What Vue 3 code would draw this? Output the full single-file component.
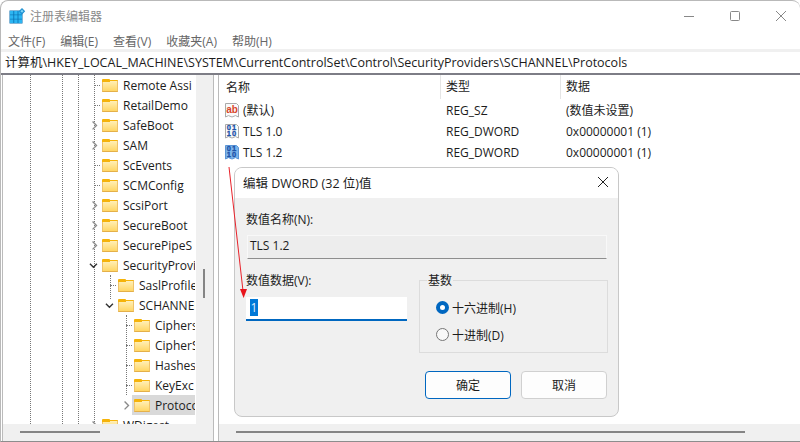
<script setup>
const menus = ['文件(F)', '编辑(E)', '查看(V)', '收藏夹(A)', '帮助(H)']
const tree = [
  { name: 'Remote Assi', level: 0, mark: 'dots' },
  { name: 'RetailDemo', level: 0, mark: 'dots' },
  { name: 'SafeBoot', level: 0, mark: 'closed' },
  { name: 'SAM', level: 0, mark: 'closed' },
  { name: 'ScEvents', level: 0, mark: 'dots' },
  { name: 'SCMConfig', level: 0, mark: 'dots' },
  { name: 'ScsiPort', level: 0, mark: 'closed' },
  { name: 'SecureBoot', level: 0, mark: 'closed' },
  { name: 'SecurePipeS', level: 0, mark: 'closed' },
  { name: 'SecurityProvi', level: 0, mark: 'open' },
  { name: 'SaslProfile', level: 1, mark: 'dots' },
  { name: 'SCHANNEL', level: 1, mark: 'open' },
  { name: 'Ciphers', level: 2, mark: 'dots' },
  { name: 'CipherS', level: 2, mark: 'dots' },
  { name: 'Hashes', level: 2, mark: 'dots' },
  { name: 'KeyExc', level: 2, mark: 'dots' },
  { name: 'Protocols', level: 2, mark: 'closed', selected: true },
  { name: 'WDigest', level: 0, mark: 'closed' },
]
const guides = [
  { x: 27, top: 0, height: 349 },
  { x: 59, top: 0, height: 349 },
  { x: 75, top: 0, height: 349 },
  { x: 91, top: 0, height: 349 },
  { x: 107, top: 200, height: 24 },
  { x: 123, top: 240, height: 80 },
]
const values = [
  { name: '(默认)', type: 'REG_SZ', data: '(数值未设置)', icon: 'sz' },
  { name: 'TLS 1.0', type: 'REG_DWORD', data: '0x00000001 (1)', icon: 'bin' },
  { name: 'TLS 1.2', type: 'REG_DWORD', data: '0x00000001 (1)', icon: 'sel' },
]
</script>

<template>
  <div class="window">
    <header class="titlebar">
      <svg class="app-icon" width="18" height="18" viewBox="0 0 18 18">
        <rect x="0.5" y="2.5" width="13" height="13" fill="#0a6fb0" />
        <g fill="#2cb5f2">
          <rect x="1" y="3" width="3.4" height="3.6" /><rect x="5.2" y="3" width="3.4" height="3.6" /><rect x="9.4" y="3" width="3.6" height="3.6" />
          <rect x="1" y="7.2" width="3.4" height="3.6" /><rect x="5.2" y="7.2" width="3.4" height="3.6" /><rect x="9.4" y="7.2" width="3.6" height="3.6" />
          <rect x="1" y="11.4" width="3.4" height="3.6" /><rect x="5.2" y="11.4" width="3.4" height="3.6" /><rect x="9.4" y="11.4" width="3.6" height="3.6" />
        </g>
        <path d="M13 0l3.2 3.2L13 6.4 9.8 3.2z" fill="#1f8fd0" />
        <path d="M13 1.6l1.6 1.6L13 4.8l-1.6-1.6z" fill="#7fd4f7" />
      </svg>
      <span class="title">注册表编辑器</span>
      <div class="controls">
        <svg width="12" height="12" viewBox="0 0 12 12"><path d="M1 6.5h10" stroke="#888" fill="none" /></svg>
        <svg width="12" height="12" viewBox="0 0 12 12"><rect x="1.5" y="1.5" width="9" height="9" rx="1" stroke="#888" fill="none" /></svg>
        <svg width="12" height="12" viewBox="0 0 12 12"><path d="M1 1l10 10M11 1L1 11" stroke="#888" fill="none" /></svg>
      </div>
    </header>

    <nav class="menubar">
      <span v-for="m in menus" :key="m">{{ m }}</span>
    </nav>

    <div class="address">计算机\HKEY_LOCAL_MACHINE\SYSTEM\CurrentControlSet\Control\SecurityProviders\SCHANNEL\Protocols</div>

    <main class="panes">
      <section class="tree-pane">
        <div class="tree-top">
          <div class="tree">
            <i v-for="g in guides" :key="g.x + '-' + g.top" class="guide" :style="{ left: g.x + 'px', top: g.top + 'px', height: g.height + 'px' }"></i>
            <div v-for="row in tree" :key="row.name" class="tree-row" :style="{ paddingLeft: 83 + row.level * 16 + 'px' }">
              <span class="slot">
                <i v-if="row.mark === 'dots'" class="hdots"></i>
                <svg v-else-if="row.mark === 'closed'" width="16" height="16" viewBox="0 0 16 16"><path d="M7.5 4l4.5 4.5L7.5 13" fill="none" stroke="#8a8a8a" stroke-width="1.6" /></svg>
                <svg v-else width="16" height="16" viewBox="0 0 16 16"><path d="M4.5 6.5l4 4 4-4" fill="none" stroke="#333" stroke-width="1.6" /></svg>
              </span>
              <span class="row-main" :class="{ selected: row.selected }">
                <i class="folder"></i>
                <span class="row-name">{{ row.name }}</span>
              </span>
            </div>
          </div>
          <div class="vscroll"><i class="vthumb"></i></div>
        </div>
        <div class="hscroll"><i class="hthumb left-thumb"></i></div>
      </section>

      <section class="list-pane">
        <div class="list-body">
          <div class="list-head">
            <span class="col-name">名称</span>
            <span class="col-type">类型</span>
            <span class="col-data">数据</span>
          </div>
          <div v-for="v in values" :key="v.name" class="list-row">
            <span class="col-name value-name">
              <svg v-if="v.icon === 'sz'" class="val-icon" width="16" height="16" viewBox="0 0 16 16">
                <path d="M1.5 1.5h11l2 2v11.5l-3-1.4-3.5 1.4-3.5-1.4-3 1.4z" fill="#fafafa" stroke="#aaa" />
                <text x="8" y="10.5" text-anchor="middle" class="ab">ab</text>
              </svg>
              <svg v-else class="val-icon" width="16" height="16" viewBox="0 0 16 16">
                <path d="M1.5 1.5h11l2 2v11.5l-3-1.4-3.5 1.4-3.5-1.4-3 1.4z" :fill="v.icon === 'sel' ? '#7db4ea' : '#fafafa'" :stroke="v.icon === 'sel' ? '#5b95d6' : '#aaa'" />
                <text text-anchor="middle" class="bin"><tspan x="8" y="7.4">01</tspan><tspan x="8" y="13.4">10</tspan></text>
              </svg>
              <span>{{ v.name }}</span>
            </span>
            <span class="col-type">{{ v.type }}</span>
            <span class="col-data">{{ v.data }}</span>
          </div>
        </div>
        <div class="hscroll"><i class="hthumb right-thumb"></i></div>
      </section>
    </main>

    <div class="dialog">
      <div class="dlg-title">
        <span>编辑 DWORD (32 位)值</span>
        <svg width="12" height="12" viewBox="0 0 12 12"><path d="M1 1l10 10M11 1L1 11" stroke="#222" fill="none" /></svg>
      </div>
      <div class="dlg-body">
        <div class="dlg-label">数值名称(N):</div>
        <div class="name-field">TLS 1.2</div>
        <div class="dlg-grid">
          <div class="value-col">
            <div class="dlg-label">数值数据(V):</div>
            <div class="value-input"><span class="sel-text">1</span></div>
          </div>
          <div class="base-box">
            <span class="legend">基数</span>
            <div class="radio-row"><i class="radio checked"></i>十六进制(H)</div>
            <div class="radio-row"><i class="radio"></i>十进制(D)</div>
          </div>
        </div>
        <div class="dlg-actions">
          <button class="btn primary">确定</button>
          <button class="btn">取消</button>
        </div>
      </div>
    </div>

    <svg class="arrow" width="30" height="140" viewBox="0 0 30 140">
      <path d="M4 0L18 124" stroke="#e8222a" stroke-width="1" fill="none" />
      <path d="M15 122h7l-3.4 9z" fill="#e8141c" />
    </svg>
  </div>
</template>

<style scoped>
.window {
  position: relative;
  box-sizing: border-box;
  width: 800px;
  height: 442px;
  overflow: hidden;
  display: flex;
  flex-direction: column;
  background: #fff;
  border: 1px solid #b9b9b9;
  border-bottom-color: #8d8d8d;
  border-right: 0;
  border-radius: 8px 8px 0 0;
  font-family: "Open Sans", "Noto Sans CJK SC", sans-serif;
  font-size: 12px;
  color: #1c1c1c;
}
.titlebar {
  height: 29px;
  display: flex;
  align-items: center;
  flex: none;
}
.app-icon { margin: 2px 0 0 8px; }
.title {
  margin-left: 3px;
  color: #8a8a8a;
  font-size: 12px;
}
.controls {
  margin-left: auto;
  display: flex;
  gap: 34px;
  padding-right: 13px;
  padding-top: 1px;
}
.controls svg { display: block; }
.menubar {
  height: 19px;
  flex: none;
  display: flex;
  align-items: center;
  gap: 15px;
  padding-left: 7px;
  color: #666;
  box-sizing: border-box;
  padding-top: 3px;
}
.address {
  flex: none;
  box-sizing: border-box;
  height: 26px;
  line-height: 21px;
  padding-left: 4px;
  font-size: 12.5px;
  border-top: 3px solid #f0f0f0;
  border-bottom: 2px solid #7d7d86;
  white-space: nowrap;
  overflow: hidden;
}
.panes {
  flex: 1;
  min-height: 0;
  display: flex;
}
.tree-pane {
  width: 212px;
  margin-left: 1px;
  flex: none;
  display: flex;
  flex-direction: column;
  border-left: 1px solid #bbb;
  border-right: 1px solid #bbb;
  box-sizing: border-box;
}
.tree-top {
  flex: 1;
  min-height: 0;
  display: flex;
}
.tree {
  position: relative;
  width: 193px;
  overflow: hidden;
  flex: none;
}
.guide {
  position: absolute;
  border-left: 1px dotted #777;
}
.tree-row {
  position: relative;
  height: 20px;
  display: flex;
  align-items: stretch;
  box-sizing: border-box;
  padding-right: 1px;
}
.slot {
  width: 14px;
  flex: none;
  display: flex;
  align-items: center;
  justify-content: center;
  position: relative;
}
.hdots {
  position: absolute;
  left: 8px;
  width: 6px;
  top: 50%;
  border-top: 1px dotted #777;
}
.row-main {
  flex: 1;
  min-width: 0;
  display: flex;
  align-items: center;
  gap: 5px;
  padding-left: 2px;
  overflow: hidden;
}
.row-main.selected { background: #d9d9d9; }
.row-name { white-space: nowrap; }
.folder {
  position: relative;
  width: 16px;
  height: 12px;
  flex: none;
  margin-top: 2px;
  box-sizing: border-box;
  background: linear-gradient(#ffefb8, #ffd665);
  border-top: 1px solid #f5b30a;
  border-bottom: 1px solid #e4b04a;
  border-left: 1px solid #eec26a;
  border-right: 1px solid #eec26a;
}
.folder::before {
  content: "";
  position: absolute;
  left: -1px;
  top: -2px;
  width: 8px;
  height: 3px;
  background: #f5b30a;
  border-radius: 1px 1px 0 0;
}
.vscroll {
  flex: 1;
  background: #f0f0f0;
  position: relative;
}
.vthumb {
  position: absolute;
  left: 7px;
  top: 194px;
  width: 2px;
  height: 29px;
  background: #858585;
}
.hscroll {
  height: 17px;
  flex: none;
  background: #f0f0f0;
  position: relative;
}
.hthumb {
  position: absolute;
  top: 7px;
  height: 2px;
  background: #858585;
}
.left-thumb { left: 17px; width: 80px; }
.right-thumb { left: 17px; width: 509px; }
.list-pane {
  flex: 1;
  min-width: 0;
  margin-left: 4px;
  display: flex;
  flex-direction: column;
  border-left: 1px solid #bbb;
}
.list-body { flex: 1; min-height: 0; }
.list-head {
  height: 25px;
  padding-bottom: 1px;
  display: flex;
  align-items: center;
  box-sizing: border-box;
}
.list-row {
  height: 21px;
  padding-bottom: 1px;
  box-sizing: border-box;
  display: flex;
  align-items: center;
}
.col-name { width: 221px; padding-left: 7px; box-sizing: border-box; flex: none; }
.col-type { width: 120px; padding-left: 6px; box-sizing: border-box; flex: none; }
.col-data { padding-left: 6px; }
.list-head .col-type, .list-head .col-data {
  border-left: 1px solid #e5e5e5;
  height: 24px;
  line-height: 24px;
}
.list-head .col-type { padding-left: 5px; }
.list-head .col-data { padding-left: 5px; }
.list-row .col-type { padding-left: 6px; }
.list-row .col-data { padding-left: 6px; }
.value-name {
  display: flex;
  align-items: center;
  gap: 3px;
  padding-left: 5px;
}
.val-icon { flex: none; }
.ab {
  font: bold 10px "Liberation Sans", sans-serif;
  fill: #d8452a;
}
.bin {
  font: bold 7.5px "Liberation Sans", sans-serif;
  fill: #1c52a8;
  stroke: #1c52a8;
  stroke-width: 0.3px;
  letter-spacing: 1px;
}
.dialog {
  position: absolute;
  left: 233px;
  top: 166px;
  width: 385px;
  height: 250px;
  box-sizing: border-box;
  background: #f0f0f0;
  border: 1px solid #c8c8c8;
  border-radius: 8px;
  overflow: hidden;
  display: flex;
  flex-direction: column;
}
.dlg-title {
  height: 30px;
  flex: none;
  box-sizing: border-box;
  background: #fff;
  display: flex;
  align-items: center;
  justify-content: space-between;
  padding: 0 9px 2px 8px;
  font-size: 12.5px;
}
.dlg-body {
  flex: 1;
  padding: 12px 11px 0 11px;
  display: flex;
  flex-direction: column;
}
.dlg-label { height: 20px; line-height: 20px; }
.name-field {
  margin: 5px 0 0 1px;
  height: 24px;
  box-sizing: border-box;
  background: #ededed;
  border: 1px solid #f8f8f8;
  border-bottom: 1px solid #8e8e8e;
  line-height: 20px;
  padding-left: 2px;
}
.dlg-grid {
  display: grid;
  grid-template-columns: 161px 189px;
  column-gap: 12px;
  margin-top: 12px;
}
.value-input {
  margin-top: 6px;
  height: 24px;
  box-sizing: border-box;
  background: #fff;
  border-bottom: 2px solid #0067c0;
  padding: 2px 0 0 4px;
}
.sel-text {
  display: block;
  width: 8px;
  height: 17px;
  line-height: 17px;
  text-align: center;
  background: #0078d7;
  color: #dfeeff;
}
.base-box {
  position: relative;
  box-sizing: border-box;
  height: 73px;
  margin-top: 9px;
  border: 1px solid #dcdcdc;
  padding-top: 13px;
}
.legend {
  position: absolute;
  left: 7px;
  top: -10px;
  background: #f0f0f0;
  padding: 0 1px;
  height: 20px;
  line-height: 20px;
}
.radio-row {
  height: 27px;
  display: flex;
  align-items: center;
  gap: 3px;
  padding-left: 16px;
}
.radio {
  width: 13px;
  height: 13px;
  box-sizing: border-box;
  border-radius: 50%;
  border: 1px solid #767676;
  background: #f8f8f8;
}
.radio.checked {
  border: 4px solid #0067c0;
  background: #fff;
}
.dlg-actions {
  display: flex;
  justify-content: flex-end;
  gap: 10px;
  margin-top: 18px;
}
.btn {
  width: 86px;
  height: 28px;
  box-sizing: border-box;
  border: 1px solid #d0d0d0;
  border-radius: 4px;
  background: #fdfdfd;
  font: inherit;
  color: #1c1c1c;
  padding: 0;
}
.btn.primary { border-color: #0067c0; }
.arrow {
  position: absolute;
  left: 224px;
  top: 166px;
  pointer-events: none;
}
</style>

<style>
body { background: #fff; }
</style>
